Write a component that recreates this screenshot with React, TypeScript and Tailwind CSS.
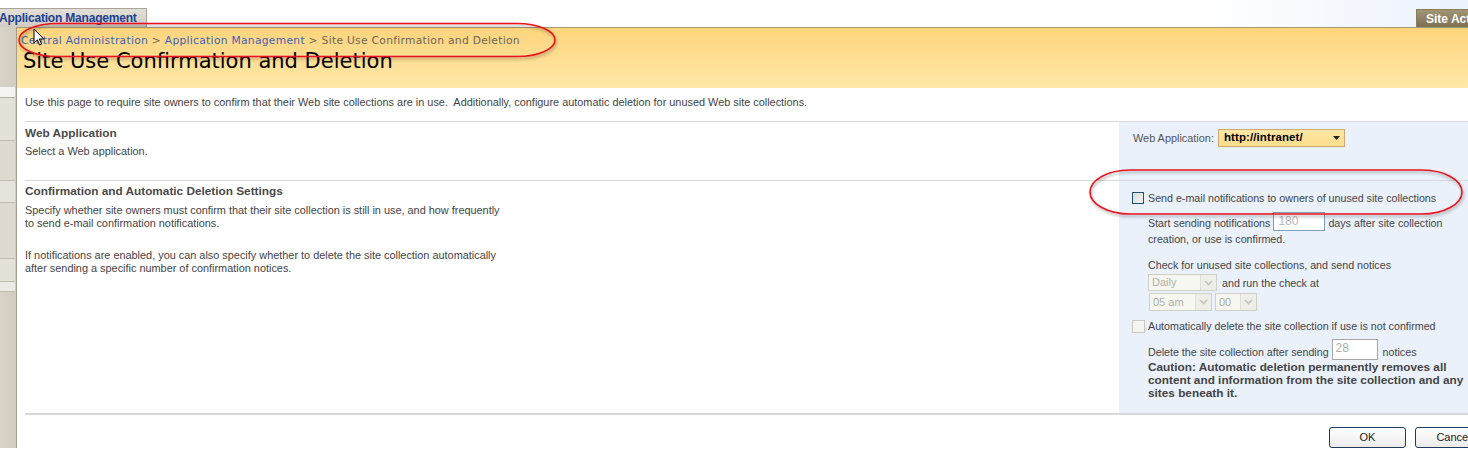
import React from 'react';

const body = "font-['Liberation_Sans',Arial,sans-serif]";

function DisabledSelect({ value, width }: { value: string; width: number }) {
  return (
    <div
      className="flex h-full items-stretch border border-[#d0d0c8] bg-[#f7f7f2]"
      style={{ width }}
    >
      <span className="flex-1 pl-[3px] text-[11px] leading-[15px] text-[#b0b0a8] self-center">{value}</span>
      <span className="flex w-[16px] items-center justify-center border-l border-[#e0e0d8] bg-[#eeeee8]">
        <svg width="9" height="6" viewBox="0 0 9 6">
          <path d="M1 1 L4.5 4.5 L8 1" fill="none" stroke="#c4c4bc" strokeWidth="1.6" />
        </svg>
      </span>
    </div>
  );
}

function LeftNav() {
  const rows = [
    { h: 60, cls: 'bg-transparent border-b-0' },
    { h: 11, cls: 'bg-[#f4f3ef] border-b border-[#b8b2a6]' },
    { h: 43, cls: 'bg-[#e4e1d9] border-b border-[#c0bab0]' },
    { h: 40, cls: 'bg-[#dedad2] border-b border-[#c0bab0]' },
    { h: 22, cls: 'bg-[#e6e3dc] border-b border-[#c0bab0]' },
    { h: 56, cls: 'bg-[#dedad2] border-b border-[#c0bab0]' },
    { h: 23, cls: 'bg-[#e4e1d9] border-b border-[#c0bab0]' },
    { h: 10, cls: 'bg-[#eceae4] border-b border-[#c0bab0]' },
  ];
  return (
    <div className="flex w-[17px] shrink-0 flex-col border-r border-[#a59d8e] bg-gradient-to-r from-[#d9d4c8] to-[#d2ccbf]">
      {rows.map((r, i) => (
        <div key={i} className={`w-[15px] ${r.cls}`} style={{ height: r.h }} />
      ))}
    </div>
  );
}

export default function App() {
  return (
    <div className={`relative h-[459px] w-[1468px] overflow-hidden bg-white ${body}`}>
      <div className="w-[1500px]">
        {/* Top bar */}
        <div className="flex h-[27px] items-end justify-between bg-gradient-to-r from-white from-80% to-[#e9f1fc]">
          <div className="flex h-[19px] w-[147px] items-center border border-b-0 border-l-0 border-[#a9a398] bg-gradient-to-b from-[#e2dfd8] to-[#d2cdc2]">
            <span className="text-[12px] font-bold tracking-[-0.2px] text-[#1b3f93] ml-[-1px]">Application Management</span>
          </div>
          <div className="flex h-[18px] w-[84px] items-center border border-b-0 border-[#8a7c60] bg-gradient-to-b from-[#a39476] to-[#7e6f52] pl-[9px]">
            <span className="text-[12px] font-bold text-white">Site Actions</span>
          </div>
        </div>

        <div className="flex">
          <LeftNav />

          <div className="flex-1">
            {/* Title area */}
            <div className="h-[61px] border-t border-[#a3977c] bg-gradient-to-b from-[#fdd47c] to-[#fee8a8] pl-[4px]">
              <div className="mt-[6px] h-[13px] font-['DejaVu_Sans',Verdana,sans-serif] text-[10.7px] leading-[13px] tracking-[0.3px] text-[#6d6656]">
                <span className="text-[#3f5fb8]">Central Administration</span>
                <span> &gt; </span>
                <span className="text-[#3f5fb8]">Application Management</span>
                <span> &gt; </span>
                <span>Site Use Confirmation and Deletion</span>
              </div>
              <div className="mt-[1px] pl-[2px] font-['DejaVu_Sans',Verdana,sans-serif] text-[21px] leading-[26px] text-black">
                Site Use Confirmation and Deletion
              </div>
            </div>

            <div className="pl-[8px]">
              <div className="pt-[8px] h-[33px] text-[10.9px] leading-[13px] text-[#444]">
                Use this page to require site owners to confirm that their Web site collections are in use.&nbsp; Additionally, configure automatic deletion for unused Web site collections.
              </div>

              <div className="border-t border-[#d8d8d8]">
                {/* Row 1 */}
                <div className="grid grid-cols-[1094px_1fr]">
                  <div className="h-[58px] pt-[4px] text-[#444]">
                    <div className="text-[11.8px] font-bold leading-[14px] text-[#4a4a4a]">Web Application</div>
                    <div className="mt-[5px] text-[10.9px] leading-[13px]">Select a Web application.</div>
                  </div>
                  <div className="flex h-[58px] items-start bg-[#eaf1fb] pl-[14px] pt-[7px]">
                    <span className="mt-[3px] text-[10.9px] leading-[13px] text-[#555]">Web Application:</span>
                    <div className="ml-[4px] flex h-[18px] w-[127px] items-center justify-between border border-[#c9ab74] bg-gradient-to-b from-[#fee6a4] to-[#fedd8a] pl-[5px] pr-[4px]">
                      <span className="text-[11.5px] font-bold text-black tracking-[0.1px]">http://intranet/</span>
                      <svg width="7" height="4" viewBox="0 0 7 4">
                        <path d="M0 0 H7 L3.5 4 Z" fill="#222" />
                      </svg>
                    </div>
                  </div>
                </div>

                {/* Row 2 */}
                <div className="grid grid-cols-[1094px_1fr] border-t border-[#d8d8d8]">
                  <div className="pt-[3px] text-[10.9px] leading-[13px] text-[#444]">
                    <div className="text-[11.8px] font-bold leading-[14px] text-[#4a4a4a]">Confirmation and Automatic Deletion Settings</div>
                    <div className="mt-[6px]">
                      Specify whether site owners must confirm that their site collection is still in use, and how frequently
                      <br />
                      to send e-mail confirmation notifications.
                    </div>
                    <div className="mt-[19px]">
                      If notifications are enabled, you can also specify whether to delete the site collection automatically
                      <br />
                      after sending a specific number of confirmation notices.
                    </div>
                  </div>

                  <div className="h-[232px] bg-[#eaf1fb] pl-[13px] text-[10.7px] leading-[13px] text-[#444]">
                    <div className="mt-[10px] flex h-[14px] items-center">
                      <span className="h-[12px] w-[12px] border border-[#1d4f7f] bg-gradient-to-br from-[#dcdcd6] to-[#f6f6f4]" />
                      <span className="ml-[4px]">Send e-mail notifications to owners of unused site collections</span>
                    </div>
                    <div className="pl-[16px]">
                      <div className="mt-[7px] flex h-[19px] items-center">
                        <span className="mt-[3px]">Start sending notifications</span>
                        <span className="ml-[3px] flex h-[19px] w-[52px] items-center border border-[#7f9db9] bg-white pl-[4px] text-[12px] text-[#b8b8b8]">180</span>
                        <span className="ml-[3px] mt-[3px]">days after site collection</span>
                      </div>
                      <div className="mt-[2px] h-[13px]">creation, or use is confirmed.</div>
                      <div className="mt-[13px] h-[13px]">Check for unused site collections, and send notices</div>
                      <div className="mt-[2px] flex h-[17px] items-center">
                        <DisabledSelect value="Daily" width={69} />
                        <span className="ml-[5px] mt-[1px]">and run the check at</span>
                      </div>
                      <div className="mt-[2px] flex h-[18px] items-center pl-[1px]">
                        <DisabledSelect value="05 am" width={63} />
                        <span className="w-[3px]" />
                        <DisabledSelect value="00" width={42} />
                      </div>
                    </div>
                    <div className="mt-[9px] flex h-[13px] items-center">
                      <span className="h-[13px] w-[13px] border border-[#c9c9c0] bg-[#f4f4f0]" />
                      <span className="ml-[3px]">Automatically delete the site collection if use is not confirmed</span>
                    </div>
                    <div className="pl-[16px]">
                      <div className="mt-[6px] flex h-[21px] items-center">
                        <span className="mt-[5px]">Delete the site collection after sending</span>
                        <span className="ml-[3px] flex h-[21px] w-[46px] items-start border border-[#a6a6a6] bg-white pl-[3px] text-[12px] leading-[16px] text-[#b0b0b0]">28</span>
                        <span className="ml-[5px] mt-[5px]">notices</span>
                      </div>
                      <div className="mt-[1px] text-[11.8px] font-bold leading-[13px] text-[#444]">
                        Caution: Automatic deletion permanently removes all
                        <br />
                        content and information from the site collection and any
                        <br />
                        sites beneath it.
                      </div>
                    </div>
                  </div>
                </div>

                <div className="h-[2px] bg-[#d8d8d8]" />

                <div className="flex justify-end gap-[9px] pt-[12px] pr-[8px]">
                  {['OK', 'Cancel'].map((b) => (
                    <button
                      key={b}
                      className="h-[21px] w-[77px] rounded-[3px] border border-[#1f3a5c] bg-gradient-to-b from-white to-[#ebebeb] text-[11px] text-[#222]"
                    >
                      {b}
                    </button>
                  ))}
                </div>
              </div>
            </div>
          </div>
        </div>
      </div>

      {/* Annotation ellipses and cursor */}
      <svg className="pointer-events-none absolute left-0 top-0" width="1468" height="459">
        <defs>
          <filter id="sh" x="-5%" y="-30%" width="110%" height="160%">
            <feDropShadow dx="1" dy="2" stdDeviation="1.5" floodColor="#000" floodOpacity="0.35" />
          </filter>
        </defs>
        <rect x="19" y="23.5" width="536" height="33" rx="38" ry="16.5" fill="none" stroke="#e8141a" strokeWidth="1.6" filter="url(#sh)" />
        <rect x="1090" y="170" width="372" height="44" rx="40" ry="22" fill="none" stroke="#e8141a" strokeWidth="1.6" filter="url(#sh)" />
        <path
          d="M34 29 L34 43 L37.3 39.8 L39.6 45 L41.6 44.1 L39.3 39 L43.8 39 Z"
          fill="#fff"
          stroke="#000"
          strokeWidth="1"
          strokeLinejoin="round"
        />
      </svg>
    </div>
  );
}
